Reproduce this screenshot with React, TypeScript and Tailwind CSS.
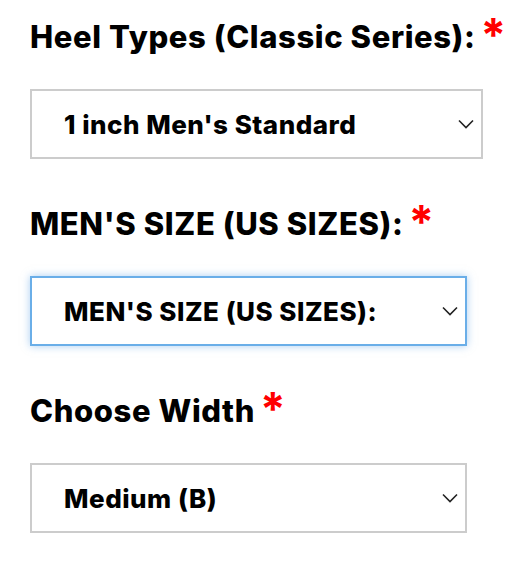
import React from 'react';

interface FieldProps {
  label: string;
  value: string;
  width: string;
  focused?: boolean;
}

const Chevron = () => (
  <svg width="16" height="10" viewBox="0 0 16 10" fill="none" className="shrink-0">
    <polyline points="1,1.5 8,8.5 15,1.5" stroke="#222" strokeWidth="1.6" />
  </svg>
);

const Field: React.FC<FieldProps> = ({ label, value, width, focused = false }) => (
  <div className="flex flex-col">
    <div className="flex items-start h-[40px]">
      <span className="text-[31px] leading-[40px] font-extrabold text-black tracking-[0.6px]">{label}</span>
      <span className="ml-[5px] text-[46px] leading-[40px] font-bold text-[#ff0000] -mt-[2px]">*</span>
    </div>
    <div
      className={`mt-[32px] h-[70px] flex items-center justify-between pl-[32px] pr-[7px] bg-white border-2 ${width} ${
        focused ? 'border-[#6aaee8] shadow-[0_0_8px_rgba(100,165,230,0.55)]' : 'border-[#cccccc]'
      }`}
    >
      <span className="text-[26px] font-extrabold text-black tracking-[0.5px]">{value}</span>
      <Chevron />
    </div>
  </div>
);

export default function App() {
  return (
    <div className="min-h-screen bg-white pl-[30px] pt-[17px] flex flex-col gap-[45px]" style={{ fontFamily: 'Inter, "Open Sans", sans-serif' }}>
      <Field label="Heel Types (Classic Series):" value="1 inch Men's Standard" width="w-[453px]" />
      <Field label="MEN'S SIZE (US SIZES):" value="MEN'S SIZE (US SIZES):" width="w-[437px]" focused />
      <Field label="Choose Width" value="Medium (B)" width="w-[437px]" />
    </div>
  );
}
